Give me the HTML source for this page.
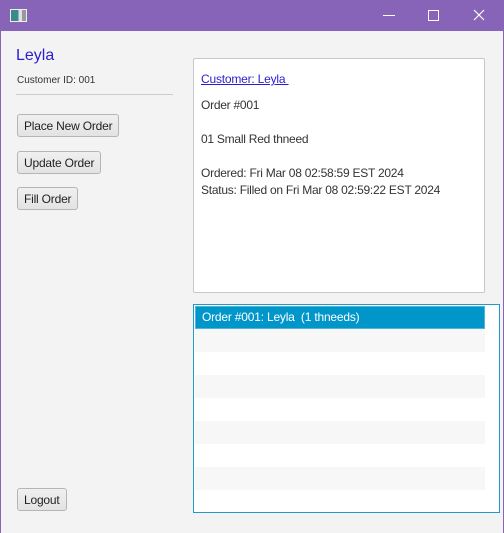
<!DOCTYPE html><html><head><style>
body{margin:0;width:504px;height:533px;background:#f3f3f3;font-family:"Segoe UI","Liberation Sans",sans-serif;position:relative;overflow:hidden;font-size:12px;color:#333}
.tb{position:absolute;left:0;top:0;width:504px;height:31px;background:#8764b8}
.bd{position:absolute;top:0;bottom:0;width:1px;background:#8764b8}
.a{position:absolute}
.btn{position:absolute;left:17px;height:23px;border:1px solid #b5b5b5;border-radius:3px;background:linear-gradient(#f0f0f0,#e3e3e3);font-size:12px;line-height:23px;padding:0 6px;color:#222;box-sizing:border-box;letter-spacing:-0.2px}
.row{position:absolute;left:195px;width:290px;height:23px}
</style></head><body>
<div class="tb"></div><div class="bd" style="left:0"></div><div class="bd" style="right:0"></div>
<div class="a" style="left:10px;top:9px;width:15px;height:11px;background:linear-gradient(90deg,#3a8a88 0 50%,#dde 50% 75%,#999 75%);border:1px solid #eee"></div>
<div class="a" style="left:383px;top:15px;width:12px;height:1px;background:#fff"></div>
<div class="a" style="left:428px;top:10px;width:9px;height:9px;border:1px solid #fff"></div>
<svg class="a" style="left:473px;top:9px" width="12" height="12"><path d="M1 1L11 11M11 1L1 11" stroke="#fff" stroke-width="1.2"/></svg>
<div class="a" style="left:16px;top:47px;font-size:16px;color:#2a1ed0">Leyla</div>
<div class="a" style="left:17px;top:75px;font-size:10px;color:#333">Customer ID: 001</div>
<div class="a" style="left:16px;top:94px;width:157px;height:1px;background:#ccc"></div>
<div class="btn" style="top:114px">Place New Order</div>
<div class="btn" style="top:151px">Update Order</div>
<div class="btn" style="top:187px">Fill Order</div>
<div class="btn" style="top:488px">Logout</div>
<div class="a" style="left:193px;top:58px;width:290px;height:233px;background:#fff;border:1px solid #c8c8c8;border-radius:2px"></div>
<div class="a" style="left:201px;top:72px;color:#2a1ed0;text-decoration:underline;letter-spacing:-0.2px">Customer: Leyla&nbsp;</div>
<div class="a" style="left:201px;top:97px;line-height:17px;letter-spacing:-0.25px">Order #001<br><br>01 Small Red thneed<br><br>Ordered: Fri Mar 08 02:58:59 EST 2024<br>Status: Filled on Fri Mar 08 02:59:22 EST 2024</div>
<div class="a" style="left:193px;top:304px;width:305px;height:207px;background:#fff;border:1px solid #1e9bc8"></div>
<div class="row" style="top:306px;background:#0096c9;border:1px solid #4fb6da;box-sizing:border-box;color:#fff;padding-left:6px;line-height:21px;letter-spacing:-0.2px">Order #001: Leyla&nbsp; (1 thneeds)</div>
<div class="row" style="top:329px;background:#f7f7f7"></div>
<div class="row" style="top:375px;background:#f7f7f7"></div>
<div class="row" style="top:421px;background:#f7f7f7"></div>
<div class="row" style="top:467px;background:#f7f7f7"></div>
</body></html>
